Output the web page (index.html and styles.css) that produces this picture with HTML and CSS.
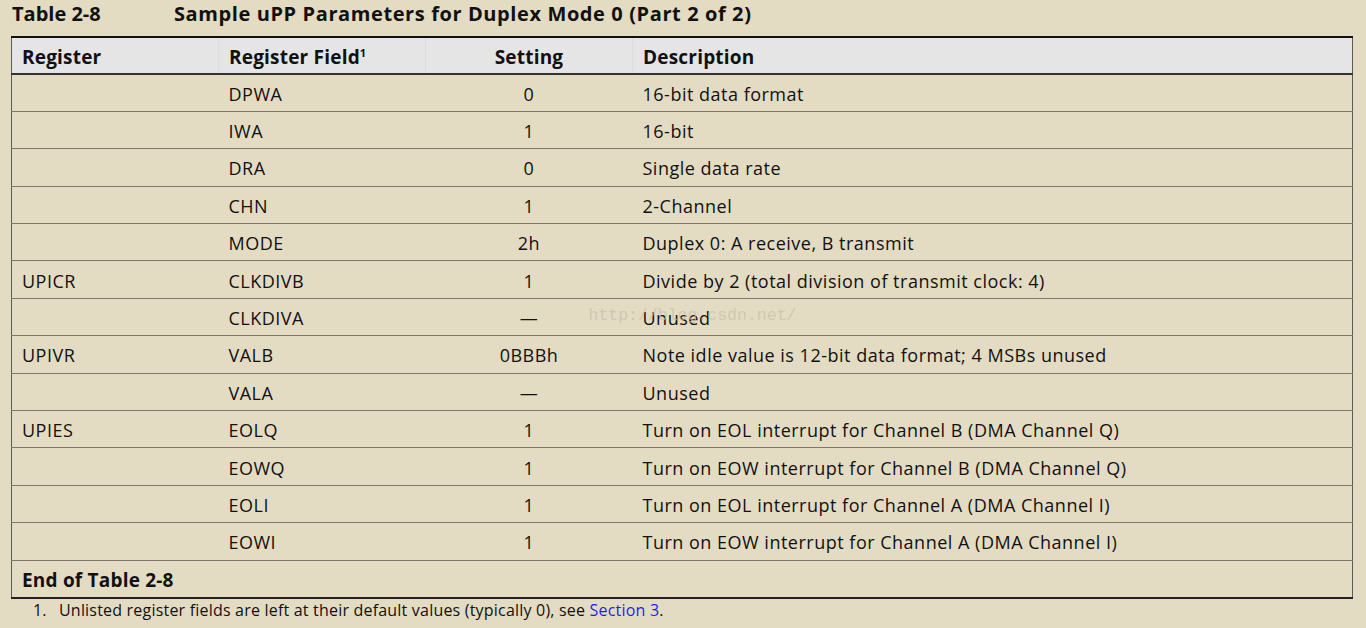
FILE: index.html
```html
<!DOCTYPE html>
<html>
<head>
<meta charset="utf-8">
<link rel="stylesheet" href="styles.css">
</head>
<body>
<div class="page">
  <div class="title">
    <span class="title-num">Table 2-8</span>
    <span class="title-text">Sample uPP Parameters for Duplex Mode 0 (Part 2 of 2)</span>
  </div>
  <table class="params">
    <colgroup>
      <col class="c1"><col class="c2"><col class="c3"><col class="c4">
    </colgroup>
    <thead>
      <tr>
        <th>Register</th>
        <th>Register Field<sup>1</sup></th>
        <th class="center">Setting</th>
        <th>Description</th>
      </tr>
    </thead>
    <tbody>
      <tr><td></td><td>DPWA</td><td class="center">0</td><td>16-bit data format</td></tr>
      <tr><td></td><td>IWA</td><td class="center">1</td><td>16-bit</td></tr>
      <tr><td></td><td>DRA</td><td class="center">0</td><td>Single data rate</td></tr>
      <tr><td></td><td>CHN</td><td class="center">1</td><td>2-Channel</td></tr>
      <tr><td></td><td>MODE</td><td class="center">2h</td><td>Duplex 0: A receive, B transmit</td></tr>
      <tr><td>UPICR</td><td>CLKDIVB</td><td class="center">1</td><td>Divide by 2 (total division of transmit clock: 4)</td></tr>
      <tr><td></td><td>CLKDIVA</td><td class="center">—</td><td class="wm-cell">Unused<span class="watermark">http://blog.csdn.net/</span></td></tr>
      <tr><td>UPIVR</td><td>VALB</td><td class="center">0BBBh</td><td>Note idle value is 12-bit data format; 4 MSBs unused</td></tr>
      <tr><td></td><td>VALA</td><td class="center">—</td><td>Unused</td></tr>
      <tr><td>UPIES</td><td>EOLQ</td><td class="center">1</td><td>Turn on EOL interrupt for Channel B (DMA Channel Q)</td></tr>
      <tr><td></td><td>EOWQ</td><td class="center">1</td><td>Turn on EOW interrupt for Channel B (DMA Channel Q)</td></tr>
      <tr><td></td><td>EOLI</td><td class="center">1</td><td>Turn on EOL interrupt for Channel A (DMA Channel I)</td></tr>
      <tr><td></td><td>EOWI</td><td class="center">1</td><td>Turn on EOW interrupt for Channel A (DMA Channel I)</td></tr>
    </tbody>
    <tfoot>
      <tr><td colspan="4" class="end">End of Table 2-8</td></tr>
    </tfoot>
  </table>
  <div class="footnote">
    <span class="fn-num">1.</span>
    <span>Unlisted register fields are left at their default values (typically 0), see <a class="link">Section 3</a>.</span>
  </div>
</div>
</body>
</html>
```

FILE: styles.css
```css
html, body {
  margin: 0;
  padding: 0;
  background: #e4dbc3;
}
body {
  width: 1366px;
  height: 628px;
  overflow: hidden;
  font-family: "Open Sans", Lato, sans-serif;
  color: #111;
}
.title {
  display: flex;
  align-items: center;
  font-weight: bold;
  font-size: 20px;
  padding-left: 12px;
  padding-bottom: 10px;
  box-sizing: border-box;
  height: 36px;
}
.title-num {
  width: 162px;
}
.title-text {
  letter-spacing: 0.6px;
}
.params {
  margin-left: 11px;
  width: 1342px;
  border-collapse: collapse;
  table-layout: fixed;
  font-size: 18px;
  letter-spacing: 0.5px;
  border-left: 1px solid #5a5a5a;
  border-right: 1px solid #5a5a5a;
}
.c1 { width: 207px; }
.c2 { width: 207px; }
.c3 { width: 207px; }
.c4 { width: auto; }
.params thead tr {
  background: #e5e5e5;
  height: 37px;
}
.params th {
  border-top: 2px solid #111;
  border-bottom: 2px solid #333;
  border-left: 1px solid #dcdcdc;
  text-align: left;
  font-weight: bold;
  padding: 2px 10px 0;
  font-size: 19px;
  letter-spacing: 0.2px;
}
.params th:first-child { border-left: none; }
.params th sup {
  font-size: 11px;
  vertical-align: 7px;
}
.params td {
  height: 37.4px;
  padding: 2px 10px 0;
  box-sizing: border-box;
  border-bottom: 1px solid #7d7768;
  white-space: nowrap;
}
.params .center { text-align: center; }
.params tbody tr { height: 37.4px; }
.params tfoot td {
  font-weight: bold;
  font-size: 19px;
  letter-spacing: 0.2px;
  border-bottom: 2px solid #222;
  height: 38px;
}
.wm-cell { position: relative; }
.watermark {
  position: absolute;
  left: -44px;
  top: 7px;
  font-family: "Liberation Mono", "DejaVu Sans Mono", monospace;
  font-size: 16.5px;
  letter-spacing: 0;
  color: rgba(200, 190, 170, 0.7);
  pointer-events: none;
}
.footnote {
  display: flex;
  padding-left: 33px;
  font-size: 16px;
  letter-spacing: 0.2px;
}
.fn-num { width: 26px; }
.link { color: #1f1fe8; }
```
